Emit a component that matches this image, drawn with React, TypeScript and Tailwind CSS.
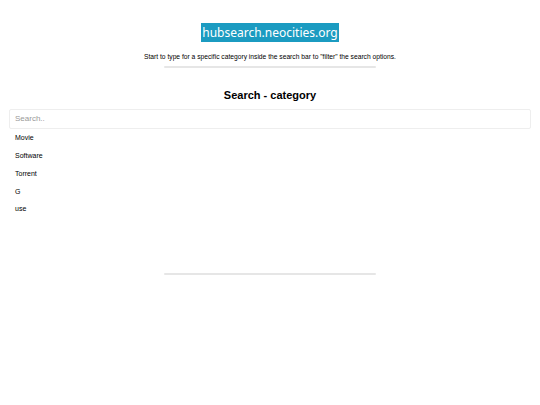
export default function App() {
  const items = ['Movie', 'Software', 'Torrent', 'G', 'use']
  return (
    <div className="min-h-[405px] bg-white font-['Liberation_Sans',Arial,sans-serif] text-black">
      <div className="flex flex-col items-center pt-[23px]">
        <div className="flex h-[19px] w-[138px] items-center justify-center overflow-hidden whitespace-nowrap bg-[#1b9bc1] font-['Noto_Sans',sans-serif] text-[12px] leading-none text-white">
          hubsearch.neocities.org
        </div>
        <p className="mt-[10px] text-[6.7px] leading-[9px]">
          Start to type for a specific category inside the search bar to "filter" the search options.
        </p>
        <hr className="mt-[5px] h-[2px] w-[212px] rounded-full border-0 bg-[#e6e6e6]" />
        <h2 className="mt-[20px] text-[11px] font-bold leading-[14px]">Search - category</h2>
      </div>
      <div className="mt-[2px] px-[9px]">
        <input
          placeholder="Search.."
          className="h-[20px] w-full rounded-[2px] border border-[#eeeeee] px-[5px] text-[8px] outline-none placeholder:text-[#999]"
        />
        <ul className="mt-[1px]">
          {items.map((it) => (
            <li key={it} className="flex h-[17.8px] items-center px-[6px] text-[7px]">
              {it}
            </li>
          ))}
        </ul>
      </div>
      <div className="flex justify-center">
        <hr className="mt-[55px] h-[2px] w-[212px] rounded-full border-0 bg-[#e6e6e6]" />
      </div>
    </div>
  )
}
